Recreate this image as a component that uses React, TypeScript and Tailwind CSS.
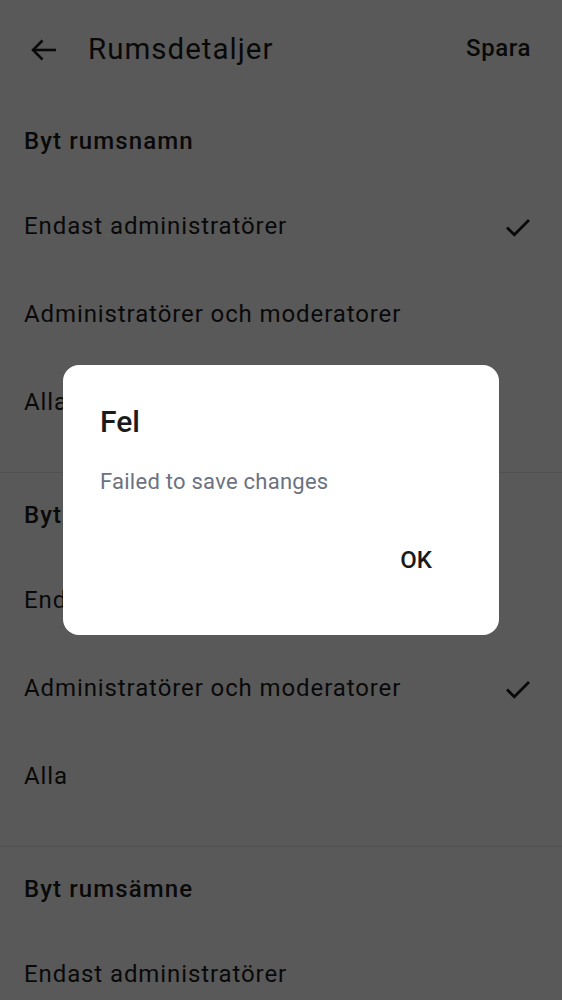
import React from "react";

type Section = {
  title: string;
  selected: number;
  rows: number;
};

const OPTIONS = ["Endast administratörer", "Administratörer och moderatorer", "Alla"];

// the last section runs past the bottom of the screen, only its first row shows
const SECTIONS: Section[] = [
  { title: "Byt rumsnamn", selected: 0, rows: 3 },
  { title: "Byt rumsavatar", selected: 1, rows: 3 },
  { title: "Byt rumsämne", selected: 1, rows: 1 },
];

function BackArrow() {
  return (
    <svg className="mt-[4px]" width="28" height="24" viewBox="0 0 28 24" fill="none" stroke="currentColor" strokeWidth="2.6">
      <path d="M4 12H27" />
      <path d="M13.5 2.5L4 12l9.5 9.5" />
    </svg>
  );
}

function Check() {
  return (
    <svg width="28" height="24" viewBox="0 0 28 24" fill="none" stroke="currentColor" strokeWidth="2.8">
      <path d="M3 13.5l7.3 7.3L25 6" />
    </svg>
  );
}

function OptionRow({ label, checked }: { label: string; checked: boolean }) {
  return (
    <div className="h-[88px] flex items-center justify-between pl-[24px] pr-[30px]">
      <span className="text-[24px] leading-[30px] tracking-[0.9px]">{label}</span>
      {checked && <Check />}
    </div>
  );
}

export default function App() {
  return (
    <div
      className="relative h-screen overflow-hidden bg-white text-[#1c1c1c]"
      style={{ fontFamily: "Roboto, 'Noto Sans', sans-serif" }}
    >
      {/* Top bar */}
      <header className="h-[96px] flex items-center pl-[29px] pr-[31px]">
        <BackArrow />
        <h1 className="ml-[31px] mt-[2px] flex-1 text-[29.5px] leading-[36px] tracking-[1px]">Rumsdetaljer</h1>
        <button className="text-[24px] leading-[30px] font-medium tracking-[0.6px]">Spara</button>
      </header>

      <div className="pt-[3px]">
        {SECTIONS.map((s, i) => (
          <section key={s.title}>
            {i > 0 && <div className="h-px bg-[#e6e6e6]" />}
            <div className="h-[83px] flex items-center pl-[24px]">
              <h2 className="text-[24px] leading-[30px] font-medium tracking-[1.1px]">{s.title}</h2>
            </div>
            {OPTIONS.slice(0, s.rows).map((o, j) => (
              <OptionRow key={o} label={o} checked={j === s.selected} />
            ))}
            <div className="h-[26px]" />
          </section>
        ))}
      </div>

      {/* Scrim + dialog */}
      <div className="fixed inset-0 bg-black/65 flex items-center justify-center">
        <div className="w-[436px] h-[270px] rounded-2xl bg-white pl-[37px] pt-[39px] flex flex-col">
          <h3 className="text-[30px] leading-[35px] font-medium text-[#1a1a1a]">Fel</h3>
          <p className="mt-[28px] text-[22px] leading-[30px] tracking-[0.25px] text-[#6b7280]">Failed to save changes</p>
          <div className="mt-[39px] flex justify-end pr-[51px]">
            <button className="h-[48px] px-4 text-[24px] font-medium text-[#1a1a1a]">OK</button>
          </div>
        </div>
      </div>
    </div>
  );
}
